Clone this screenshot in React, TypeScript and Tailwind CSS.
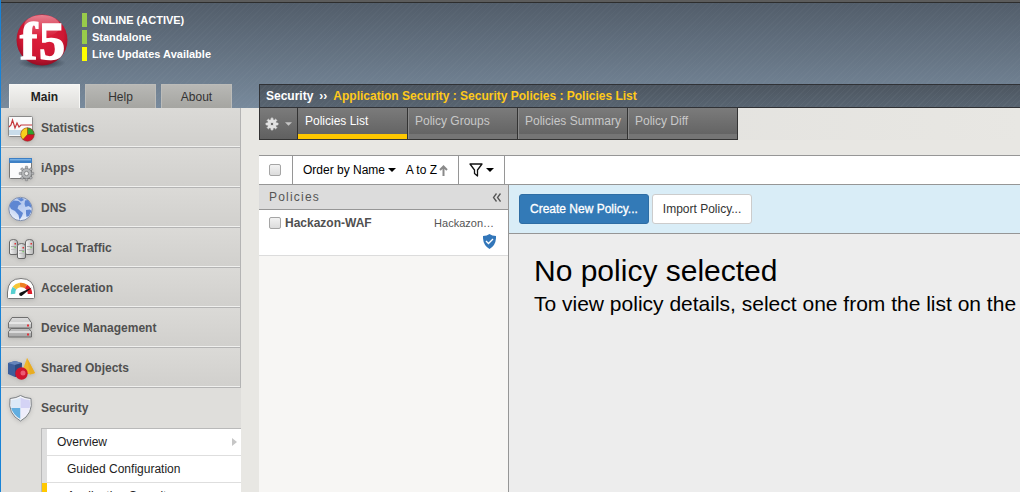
import React from "react";

const Svg = ({ children, box = "0 0 30 30" }: { children: React.ReactNode; box?: string }) => (
  <svg viewBox={box} className="size-[30px] shrink-0 drop-shadow-sm" aria-hidden="true">
    {children}
  </svg>
);

function Gear({ cx, cy, r, hole, fill, stroke }: { cx: number; cy: number; r: number; hole: string; fill: string; stroke: string }) {
  return (
    <g transform={`translate(${cx} ${cy})`}>
      {[0, 45, 90, 135, 180, 225, 270, 315].map((a) => (
        <rect key={a} x={-r * 0.2} y={-r * 1.3} width={r * 0.4} height={r * 0.6} rx="0.4" fill={fill} stroke={stroke} strokeWidth="0.6" transform={`rotate(${a})`} />
      ))}
      <circle r={r * 0.9} fill={fill} stroke={stroke} strokeWidth="0.6" />
      <circle r={r * 0.38} fill={hole} stroke={stroke} strokeWidth="0.8" />
    </g>
  );
}

const StatisticsIcon = () => (
  <Svg box="1 0 30 30">
    <rect x="3.500" y="3.500" width="24" height="20" rx="1" fill="#fafafa" stroke="#8a8a8a" />
    <rect x="4" y="17" width="23" height="5" fill="#c9dcea" />
    <path d="M4 14l2-2 1.500-5 2.500 8 2-5 2 4 2-2h11" fill="none" stroke="#c4383c" strokeWidth="1.200" />
    <circle cx="22.500" cy="21.500" r="6.800" fill="#d5132c" />
    <path d="M22.500 21.500V14.700A6.800 6.800 0 0 1 29.300 21.500z" fill="#2fa32f" />
    <path d="M22.500 21.500L18 26.600A6.800 6.800 0 0 1 22.500 14.700z" fill="#f7d01c" />
    <path d="M22.500 14.700v6.800h6.800M22.500 21.500l-4.500 5" fill="none" stroke="#6a3a12" strokeWidth="0.500" />
    <circle cx="22.500" cy="21.500" r="6.800" fill="none" stroke="#7e3a22" strokeWidth="0.500" />
  </Svg>
);

const IAppsIcon = () => (
  <Svg box="1 0 30 30">
    <rect x="4.500" y="5.500" width="22" height="20" rx="1" fill="#fbfbfc" stroke="#777" />
    <rect x="4" y="5" width="23" height="5" fill="#3d7fc4" />
    <rect x="5" y="6" width="21" height="1.500" fill="#78b0e4" />
    <Gear cx={21.5} cy={20.5} r={5.6} fill="#b4b6b8" stroke="#77797b" hole="#eee" />
  </Svg>
);

const DnsIcon = () => (
  <Svg box="1 0 30 30">
    <defs>
      <radialGradient id="globe" cx="50%" cy="25%" r="80%">
        <stop offset="0" stopColor="#b4c8ee" />
        <stop offset="0.500" stopColor="#c4d5f4" />
        <stop offset="1" stopColor="#f0f5fd" />
      </radialGradient>
    </defs>
    <circle cx="15.500" cy="16" r="11.700" fill="url(#globe)" stroke="#8492ae" />
    <path d="M4.500 13q1-4 4-5.500l5 .5 3 3-3 1.500-1 3 3 2.500 2.500 2-1 3-2.500 4-1-5-3.500-4-4-2zM12 5.500l5-.5 2 2-3 1.500zM20 7.500l3-.5q3 3 3.500 8l-3-2-3 1-1-3zM21 17l4-.500 1.500 1.500-2.500 5-2.500 1-.500-3.500z" fill="#5f87d2" />
  </Svg>
);

const TowerShape = ({ x, y }: { x: number; y: number }) => (
  <g transform={`translate(${x} ${y})`}>
    <path d="M0.500 3Q0.500 0.500 4.500 0.500T8.500 3v11q0 1.500-1.500 1.500H2Q0.500 15.500 0.500 14z" fill="url(#tower)" stroke="#686868" />
    <rect x="2" y="7" width="5" height="0.800" fill="#999" />
    <rect x="2" y="10" width="5" height="0.800" fill="#bbb" />
    <rect x="5.500" y="4" width="1.500" height="1.500" fill="#dd3336" />
    <rect x="5.500" y="8" width="1.200" height="1.200" fill="#63c94b" />
  </g>
);

const TrafficIcon = () => (
  <Svg>
    <defs>
      <linearGradient id="tower">
        <stop offset="0" stopColor="#f8f8f8" />
        <stop offset="1" stopColor="#b4b4b4" />
      </linearGradient>
    </defs>
    <TowerShape x={3} y={6} />
    <TowerShape x={19} y={6} />
    <TowerShape x={11} y={10} />
  </Svg>
);

const AccelIcon = () => (
  <Svg>
    <path d="M1.500 24.500V19Q2 5.500 15 5.500T28.500 19v5.500q0 1-1 1h-25q-1 0-1-1z" fill="#fff" stroke="#777" />
    <path d="M7 21A8.500 8.500 0 0 1 8.500 15" fill="none" stroke="#57cfd0" strokeWidth="4.500" />
    <path d="M8.500 15A8.500 8.500 0 0 1 14 12" fill="none" stroke="#f5c535" strokeWidth="4.500" />
    <path d="M14 12A9 9 0 0 1 20 13.500" fill="none" stroke="#ef7d22" strokeWidth="4.500" />
    <path d="M20 13.500A9 9 0 0 1 24 21" fill="none" stroke="#dc1c29" strokeWidth="4.500" />
    <path d="M13.500 20L26 14.500 15.500 23q-3 0-2-3z" fill="#111" />
  </Svg>
);

const DeviceIcon = () => (
  <Svg>
    <defs>
      <linearGradient id="unit" x2="0" y2="1">
        <stop offset="0" stopColor="#dcdcdc" />
        <stop offset="1" stopColor="#a8a8a8" />
      </linearGradient>
    </defs>
    <path d="M2.500 10L6 4.500h16L25.500 10v5h-23zM2.500 19L5 15.500h18l2.500 3.500v5h-23z" fill="url(#unit)" stroke="#6f6f6f" strokeLinejoin="round" />
    <path d="M3 10h22M3 19h22" stroke="#fff" />
    <rect x="21" y="11.500" width="2" height="2" fill="#e0333a" />
    <rect x="21" y="20.500" width="2" height="2" fill="#e0333a" />
  </Svg>
);

const ObjectsIcon = () => (
  <Svg>
    <path d="M2 10l7-2 7 2-1 12-6 2-7-3z" fill="#3c5f9c" />
    <path d="M2 10l7-2 7 2-7 2z" fill="#6685bb" />
    <path d="M9 12l7-2-1 12-6 2z" fill="#2e4a80" />
    <path d="M21 5l8 15q-5 3-13-1z" fill="#f0b62a" />
    <path d="M21 5l8 15-5 1.500z" fill="#e8ac22" />
    <circle cx="15.500" cy="20.500" r="6.200" fill="#d0142e" />
    <circle cx="17" cy="20" r="2.500" fill="#f46c84" opacity="0.800" />
  </Svg>
);

const SecurityIcon = () => (
  <Svg box="1 0 30 30">
    <path d="M15.500 2.500Q19.500 5 26 5.500 28.500 21 15.500 28 2.500 21 5 5.500 11.500 5 15.500 2.500z" fill="#f4f5f8" stroke="#7c8085" />
    <path d="M15.500 4.500v10.500H6.200q-.7-4 .2-8Q11.500 6.500 15.500 4.500z" fill="#dce9f8" />
    <path d="M15.500 4.500v10.500h9.300q.7-4-.2-8Q19.500 6.500 15.500 4.500z" fill="#d4d3f5" />
    <path d="M15.500 15v11q-7.500-4-9.300-11z" fill="#62aee0" />
    <path d="M15.500 15v11q7.500-4 9.300-11z" fill="#eeedfb" />
  </Svg>
);

const menu = [
  { label: "Statistics", Icon: StatisticsIcon },
  { label: "iApps", Icon: IAppsIcon },
  { label: "DNS", Icon: DnsIcon },
  { label: "Local Traffic", Icon: TrafficIcon },
  { label: "Acceleration", Icon: AccelIcon },
  { label: "Device Management", Icon: DeviceIcon },
  { label: "Shared Objects", Icon: ObjectsIcon },
];

const statuses = [
  { text: "ONLINE (ACTIVE)", bar: "bg-[#98cb4a]" },
  { text: "Standalone", bar: "bg-[#98cb4a]" },
  { text: "Live Updates Available", bar: "bg-[#ffff00]" },
];

const Logo = () => (
  <svg viewBox="0 0 56 56" className="size-14 shrink-0" role="img" aria-label="f5">
    <defs>
      <radialGradient id="ball" cx="50%" cy="40%" r="60%">
        <stop offset="0" stopColor="#e01f3c" />
        <stop offset="0.700" stopColor="#cf1733" />
        <stop offset="1" stopColor="#960d24" />
      </radialGradient>
      <linearGradient id="gloss" x2="0" y2="1">
        <stop offset="0" stopColor="#fff" stopOpacity="0.450" />
        <stop offset="1" stopColor="#fff" stopOpacity="0" />
      </linearGradient>
      <radialGradient id="shade">
        <stop offset="0" stopColor="#222c38" stopOpacity="0.900" />
        <stop offset="1" stopColor="#222c38" stopOpacity="0" />
      </radialGradient>
    </defs>
    <ellipse cx="29" cy="50" rx="24" ry="6" fill="url(#shade)" />
    <circle cx="29" cy="27" r="25.500" fill="url(#ball)" />
    <ellipse cx="29" cy="13" rx="18" ry="11" fill="url(#gloss)" />
    <g fill="#fff" stroke="#fff" fontFamily="Liberation Serif, serif" fontWeight="700" fontSize="52">
      <text x="7" y="46" strokeWidth="1.500">f</text>
      <text x="26" y="46" strokeWidth="1.500">5</text>
    </g>
  </svg>
);

const Caret = () => (
  <svg viewBox="0 0 8 4" className="h-1 w-2" aria-hidden="true"><path d="M0 0h8L4 4z" fill="currentColor" /></svg>
);

const checkbox = "size-3 shrink-0 appearance-none rounded-[2px] border border-[#a5a5a5] bg-linear-to-b from-[#f2f2f2] to-[#dcdcdc] checked:bg-[#337ab7]";

export default function App() {
  return (
    <div className="flex h-screen flex-col overflow-hidden border-l border-[#1883d7] bg-[#e8e7e3] font-['Liberation_Sans',Arial,sans-serif] text-xs text-black">
      <header className="shrink-0 border-t-2 border-[#5c5c5c] bg-[repeating-linear-gradient(135deg,rgba(255,255,255,0.02)_0px,rgba(255,255,255,0.02)_1px,transparent_1px,transparent_4px),linear-gradient(to_bottom,#525d6a,#788a9c)]">
        <div className="flex h-[82px] border-t border-[#2d2d2d] pl-3">
          <div className="flex items-start gap-[13px] pt-2.5">
            <Logo />
            <ul className="flex flex-col gap-[3px] text-[11px] leading-[14px] font-bold text-white">
              {statuses.map((s) => (
                <li key={s.text} className="flex gap-[5px]">
                  <span className={`w-[5px] ${s.bar}`} />
                  {s.text}
                </li>
              ))}
            </ul>
          </div>
        </div>
        <div className="flex h-6">
          <nav className="flex w-60 shrink-0 gap-[5px] pl-2">
            <a href="#main" className="flex w-[71px] items-center justify-center border border-b-0 border-[#f7f7f5] bg-linear-to-b from-[#f3f3f1] to-[#dfdedb] font-bold text-[#222]">Main</a>
            <a href="#help" className="flex w-[71px] items-center justify-center border border-b-0 border-[#bcbcb9] bg-linear-to-b from-[#b8b8b5] to-[#a5a5a1] text-[#333]">Help</a>
            <a href="#about" className="flex w-[71px] items-center justify-center border border-b-0 border-[#bcbcb9] bg-linear-to-b from-[#b8b8b5] to-[#a5a5a1] text-[#333]">About</a>
          </nav>
          <h1 className="ml-[18px] flex flex-1 items-center gap-1.5 border border-r-0 border-[#303236] bg-[repeating-linear-gradient(135deg,rgba(255,255,255,0.03)_0px,rgba(255,255,255,0.03)_1px,transparent_1px,transparent_4px),linear-gradient(to_bottom,#4d5660,#586471)] pl-1.5 font-bold whitespace-nowrap text-[#ffc91a]">
            <span className="text-white">Security</span>
            <span className="text-white">››</span>
            <span>Application Security : Security Policies : Policies List</span>
          </h1>
        </div>
      </header>

      <div className="flex min-h-0 flex-1">
        <aside className="w-60 shrink-0 bg-[#dfdedb]">
          <ul>
            {menu.map(({ label, Icon }) => (
              <li key={label} className="border-r border-b border-[#b4b4b4]">
                <a href="#menu" className="flex h-[39px] items-center gap-[5px] border-b border-[#f0f0ee] bg-linear-to-b from-[#dbdad7] to-[#d1d0cd] pt-px pl-[5px] font-bold text-[#505050]">
                  <Icon />
                  {label}
                </a>
              </li>
            ))}
            <li>
              <a href="#security" className="flex h-10 items-center gap-[5px] pl-[5px] font-bold text-[#505050]">
                <SecurityIcon />
                Security
              </a>
              <ul className="ml-10 border-t border-l border-[#b9b9b9] text-[#222]">
                <li className="border-l-[5px] border-[#dedede] bg-white">
                  <a href="#overview" className="flex h-[27px] items-center justify-between border-b border-[#dedede] pr-1 pl-2.5">
                    Overview
                    <svg viewBox="0 0 5 8" className="h-2 w-[5px]" aria-hidden="true"><path d="M0 0l5 4-5 4z" fill="#c6c6c6" /></svg>
                  </a>
                </li>
                <li className="border-l-[5px] border-[#dedede] bg-white">
                  <a href="#guided" className="flex h-[27px] items-center border-b border-[#dedede] pl-5">Guided Configuration</a>
                </li>
                <li className="border-l-[5px] border-[#ffc800] bg-white">
                  <a href="#appsec" className="flex h-[27px] items-start pt-[5px] pl-5 leading-4">Application Security</a>
                </li>
              </ul>
            </li>
          </ul>
        </aside>

        <main className="ml-[18px] flex min-w-0 flex-1 flex-col">
          <div className="mb-[15px] flex shrink-0 bg-linear-to-r from-[#dfdedb] to-[#e8e7e3]">
            <nav className="flex h-8 border-b border-[#333] bg-linear-to-b from-[#7b7b7b] to-[#606060]">
              <button aria-label="Options" className="flex w-[39px] items-center justify-center gap-1.5 border-x border-[#333] text-[#ddd]">
                <svg viewBox="0 0 12 12" className="size-3.5" aria-hidden="true">
                  <Gear cx={6} cy={6} r={4} fill="#e2e2e2" stroke="#e2e2e2" hole="#6d6d6d" />
                </svg>
                <svg viewBox="0 0 8 4" className="h-1 w-[7px]" aria-hidden="true"><path d="M0 0h8L4 4z" fill="#c5c5c5" /></svg>
              </button>
              <a href="#list" className="w-[110px] border-r border-[#333] pt-[5px] pl-[7px] leading-4 text-white shadow-[inset_0_-5px_0_#ffc800]">Policies List</a>
              {["Policy Groups", "Policies Summary", "Policy Diff"].map((t) => (
                <a key={t} href="#tab" className="w-[110px] border-r border-[#333] pt-[5px] pl-[7px] leading-4 whitespace-nowrap text-[#c8c8c8] shadow-[inset_1px_0_0_#8a8a8a,inset_0_-5px_0_#757575]">{t}</a>
              ))}
            </nav>
          </div>

          <div className="flex h-[30px] shrink-0 border-y border-[#969696] bg-white">
            <label className="flex w-[34px] items-center border-r border-[#969696] pl-2.5">
              <input type="checkbox" aria-label="Select all" className={checkbox} />
            </label>
            <div className="flex w-[166px] items-center justify-between border-r border-[#969696] pr-2.5 pl-2.5">
              <button className="flex items-center gap-[3px]">Order by Name <Caret /></button>
              <button className="flex items-center gap-0.5">
                A to Z
                <svg viewBox="0 0 9 11" className="h-[11px] w-[9px]" fill="none" stroke="#8a8a8a" strokeWidth="2" aria-hidden="true"><path d="M4.500 11V2M1 5l3.500-3.500L8 5" /></svg>
              </button>
            </div>
            <button aria-label="Filter" className="flex w-[46px] items-center justify-center gap-[3px] border-r border-[#969696]">
              <svg viewBox="0 0 14 14" className="size-3.5" fill="none" stroke="#111" strokeWidth="1.300" strokeLinejoin="round" aria-hidden="true"><path d="M1 1h12L8.500 7v6L5.500 10.500V7z" /></svg>
              <Caret />
            </button>
          </div>

          <div className="flex min-h-0 flex-1">
            <section className="w-[250px] shrink-0 border-r border-[#969696] bg-[#f7f6f4]">
              <div className="flex h-[25px] items-center justify-between border-b border-[#969696] bg-[#dcdcdc] pr-[7px] pl-2.5 text-[#555]">
                <h2 className="tracking-widest">Policies</h2>
                <button aria-label="Collapse">
                  <svg viewBox="0 0 9 9" className="size-[9px]" fill="none" stroke="#555" strokeWidth="1.300" aria-hidden="true"><path d="M4.500 0.500l-3 4 3 4M8.500 0.500l-3 4 3 4" /></svg>
                </button>
              </div>
              <div className="h-[46px] border-b border-[#dcdcdc] bg-white pt-[5px] pr-3.5 pl-2.5">
                <div className="flex items-start justify-between leading-4">
                  <label className="flex items-center gap-1 font-bold text-[#505050]">
                    <input type="checkbox" className={checkbox} />
                    Hackazon-WAF
                  </label>
                  <span className="text-[11px] text-[#555]">Hackazon…</span>
                </div>
                <svg viewBox="0 0 13 15" className="-mr-0.5 ml-auto mt-[3px] h-[15px] w-[13px]" aria-hidden="true">
                  <path d="M6.500 0Q9 2 13 2q.5 9-6.500 13Q-.5 11 0 2q4 0 6.500-2z" fill="#3276b9" />
                  <path d="M3 7l2.500 2.500L10 5" fill="none" stroke="#fff" strokeWidth="1.400" />
                </svg>
              </div>
            </section>
            <section className="flex min-w-0 flex-1 flex-col overflow-hidden bg-[#ededed]">
              <div className="flex h-[49px] shrink-0 items-center gap-[3px] border-b border-[#969696] bg-[#d9edf7] pl-2.5">
                <button className="h-[30px] rounded-[3px] border border-[#2e6da4] bg-[#337ab7] px-2.5 text-white [-webkit-text-stroke:0.3px_white]">Create New Policy...</button>
                <button className="h-[30px] rounded-[3px] border border-[#ccc] bg-white px-2.5 text-[#333]">Import Policy...</button>
              </div>
              <div className="pt-5 pl-[25px] whitespace-nowrap">
                <h2 className="text-[30px] leading-[34px]">No policy selected</h2>
                <p className="text-[21px] leading-8">To view policy details, select one from the list on the</p>
              </div>
            </section>
          </div>
        </main>
      </div>
    </div>
  );
}
